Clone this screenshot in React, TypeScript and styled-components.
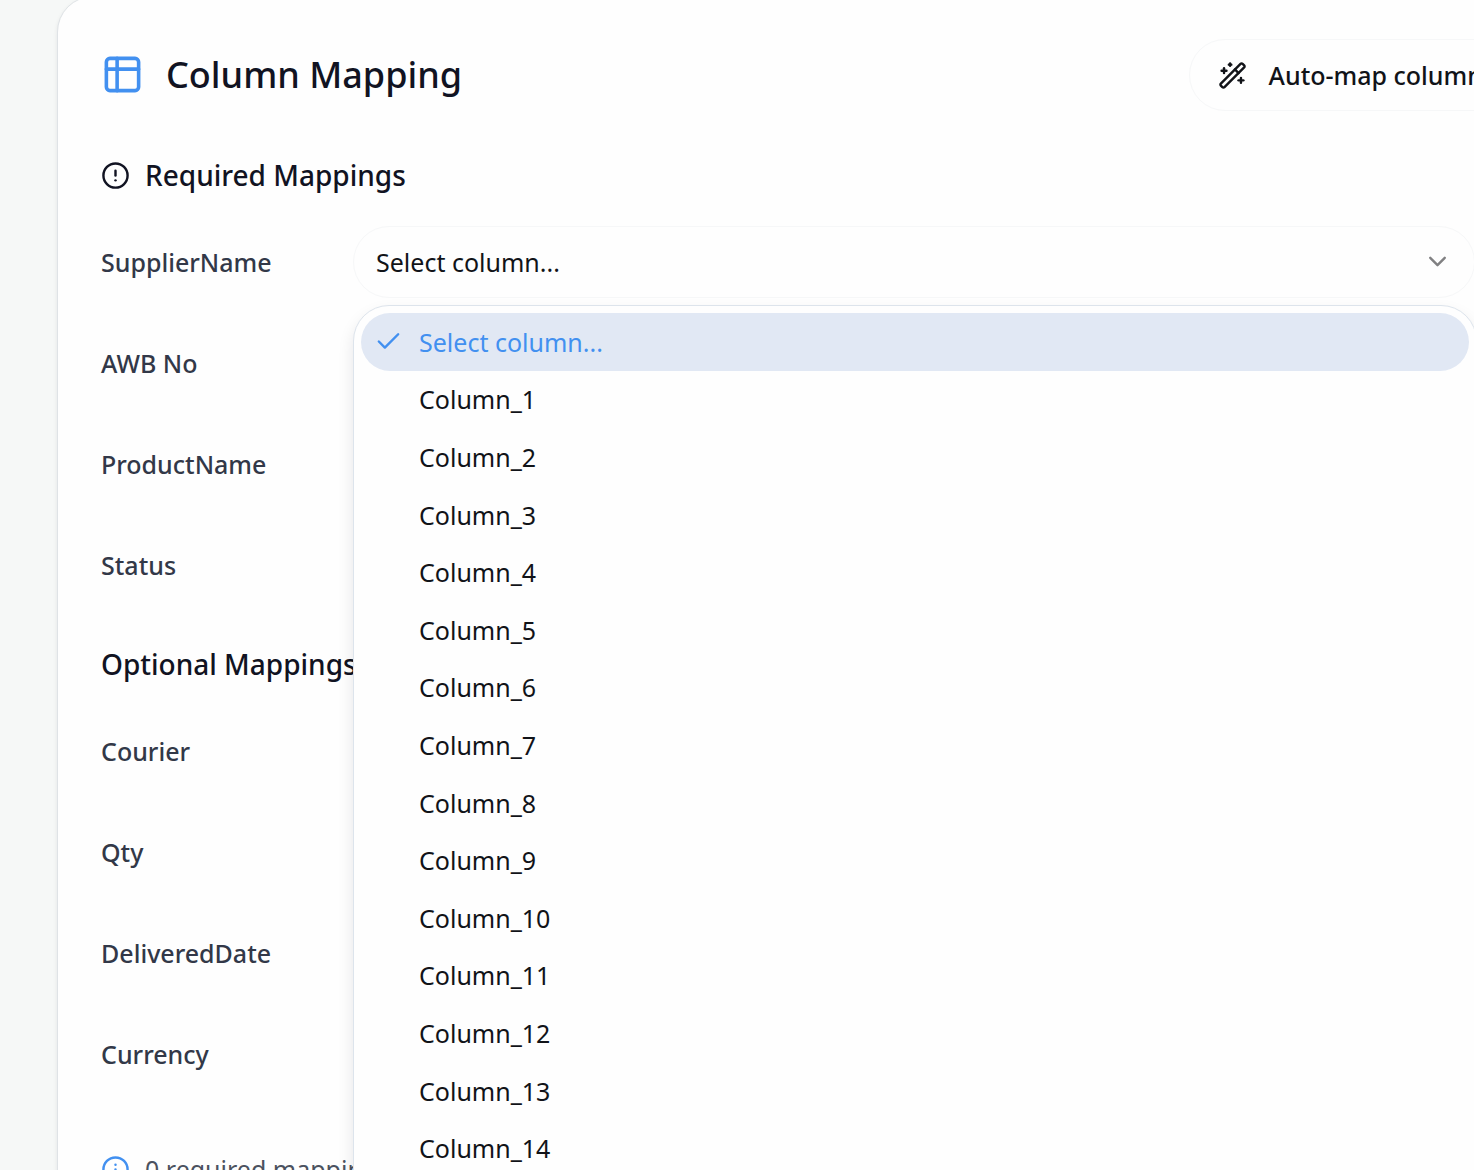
import React, { useState } from "react";
import styled, { createGlobalStyle } from "styled-components";
import { Check, ChevronDown, CircleAlert, Info, WandSparkles } from "lucide-react";

const GlobalStyle = createGlobalStyle`
  *, *::before, *::after { box-sizing: border-box; }
  body {
    margin: 0;
    background: #f6f8f7;
    font-family: "Noto Sans", "Open Sans", sans-serif;
    font-size: 25px;
    color: #111318;
  }
`;

const Page = styled.main`
  height: 100vh;
  overflow: hidden;
  padding-left: 57px;
`;

const Card = styled.section`
  margin: -4px -94px 0 0;
  padding: 42px 43px;
  background: #fefefe;
  border: 1px solid #dfe3e6;
  border-radius: 36px;
  box-shadow: 0 2px 4px rgba(16, 24, 40, 0.08);
`;

const Header = styled.header`
  display: flex;
  align-items: center;
  justify-content: space-between;
  height: 72px;
  margin-bottom: 43px;
`;

const Title = styled.h1`
  display: flex;
  align-items: center;
  gap: 22px;
  margin: 0;
  padding-bottom: 2px;
  font-size: 36px;
  line-height: 43px;
  font-weight: 500;
  color: #111322;
`;

const TableIcon = styled.svg`
  width: 43px;
  height: 43px;
  fill: none;
  stroke: #4290f0;
  stroke-width: 2;
  stroke-linecap: round;
  stroke-linejoin: round;
`;

const AutoMapButton = styled.button`
  display: flex;
  align-items: center;
  gap: 22px;
  height: 72px;
  padding: 0 28px;
  border: 1px solid #f6f7f8;
  border-radius: 36px;
  background: #fefefe;
  color: #111318;
  font: inherit;
  font-weight: 500;
  white-space: nowrap;
`;

const Group = styled.section`
  margin-bottom: 42px;
`;

const GroupTitle = styled.h2`
  display: flex;
  align-items: center;
  gap: 15px;
  margin: 0 0 29px;
  font-size: 28px;
  line-height: 43px;
  font-weight: 500;
  color: #111322;
`;

const Rows = styled.div`
  display: grid;
  gap: 29px;
`;

const Row = styled.div`
  display: grid;
  grid-template-columns: 252px 1fr;
  align-items: center;
  padding-right: 49px;
`;

const FieldLabel = styled.label`
  font-weight: 500;
  color: #323848;
`;

const Field = styled.div`
  position: relative;
  display: grid;
`;

const Select = styled.select`
  height: 72px;
  padding: 0 60px 0 22px;
  border: 1px solid #f6f7f8;
  border-radius: 36px;
  background: #fefefe;
  color: #111318;
  font: inherit;
  appearance: none;
`;

const Chevron = styled(ChevronDown)`
  position: absolute;
  right: 23px;
  top: 21px;
  color: #808082;
  pointer-events: none;
`;

const Menu = styled.div`
  position: absolute;
  z-index: 1;
  top: calc(100% + 7px);
  left: 0;
  right: -2px;
  height: 940px;
  display: flex;
  flex-direction: column;
  padding: 7px 7px 67px;
  border: 1px solid #dde4ec;
  border-radius: 36px;
  background: #fefefe;
  box-shadow: 0 8px 16px rgba(16, 24, 40, 0.1);
`;

const Option = styled.button<{ $selected: boolean }>`
  flex: 1;
  display: grid;
  grid-template-columns: 29px 1fr;
  align-items: center;
  gap: 16px;
  padding: 0 13px;
  border: 0;
  border-radius: 29px;
  background: ${(p) => (p.$selected ? "#e1e8f4" : "transparent")};
  color: ${(p) => (p.$selected ? "#4290f0" : "#111318")};
  font: inherit;
  text-align: left;
`;

const OptionText = styled.span`
  grid-column: 2;
`;

const Summary = styled.p`
  display: flex;
  align-items: center;
  gap: 15px;
  margin: 0;
  padding-top: 16px;
  line-height: 43px;
  color: #4b5260;
`;

const PLACEHOLDER = "Select column...";
const COLUMNS = [PLACEHOLDER, ...Array.from({ length: 14 }, (_, i) => `Column_${i + 1}`)];
const REQUIRED = ["SupplierName", "AWB No", "ProductName", "Status"];
const OPTIONAL = ["Courier", "Qty", "DeliveredDate", "Currency"];

function MappingRow({ name, open = false }: { name: string; open?: boolean }) {
  const [value, setValue] = useState(PLACEHOLDER);
  const id = `map-${name.replace(/\s/g, "-")}`;
  return (
    <Row>
      <FieldLabel htmlFor={id}>{name}</FieldLabel>
      <Field>
        <Select id={id} value={value} onChange={(e) => setValue(e.target.value)}>
          {COLUMNS.map((c) => (
            <option key={c}>{c}</option>
          ))}
        </Select>
        <Chevron size={29} aria-hidden />
        {open && (
          <Menu role="listbox" aria-label={name}>
            {COLUMNS.map((c) => (
              <Option
                key={c}
                type="button"
                role="option"
                aria-selected={c === value}
                $selected={c === value}
                onClick={() => setValue(c)}
              >
                {c === value && <Check size={29} color="#4290f0" aria-hidden />}
                <OptionText>{c}</OptionText>
              </Option>
            ))}
          </Menu>
        )}
      </Field>
    </Row>
  );
}

export default function App() {
  return (
    <>
      <GlobalStyle />
      <Page>
        <Card>
          <Header>
            <Title>
              <TableIcon viewBox="0 0 24 24" aria-hidden>
                <rect x="3" y="3" width="18" height="18" rx="2" />
                <path d="M3 9h18M9 3v18" />
              </TableIcon>
              Column Mapping
            </Title>
            <AutoMapButton type="button">
              <WandSparkles size={29} aria-hidden />
              Auto-map columns
            </AutoMapButton>
          </Header>
          <Group>
            <GroupTitle>
              <CircleAlert size={29} aria-hidden />
              Required Mappings
            </GroupTitle>
            <Rows>
              {REQUIRED.map((name, i) => (
                <MappingRow key={name} name={name} open={i === 0} />
              ))}
            </Rows>
          </Group>
          <Group>
            <GroupTitle>Optional Mappings</GroupTitle>
            <Rows>
              {OPTIONAL.map((name) => (
                <MappingRow key={name} name={name} />
              ))}
            </Rows>
          </Group>
          <Summary>
            <Info size={29} color="#4290f0" aria-hidden />
            0 required mappings
          </Summary>
        </Card>
      </Page>
    </>
  );
}
